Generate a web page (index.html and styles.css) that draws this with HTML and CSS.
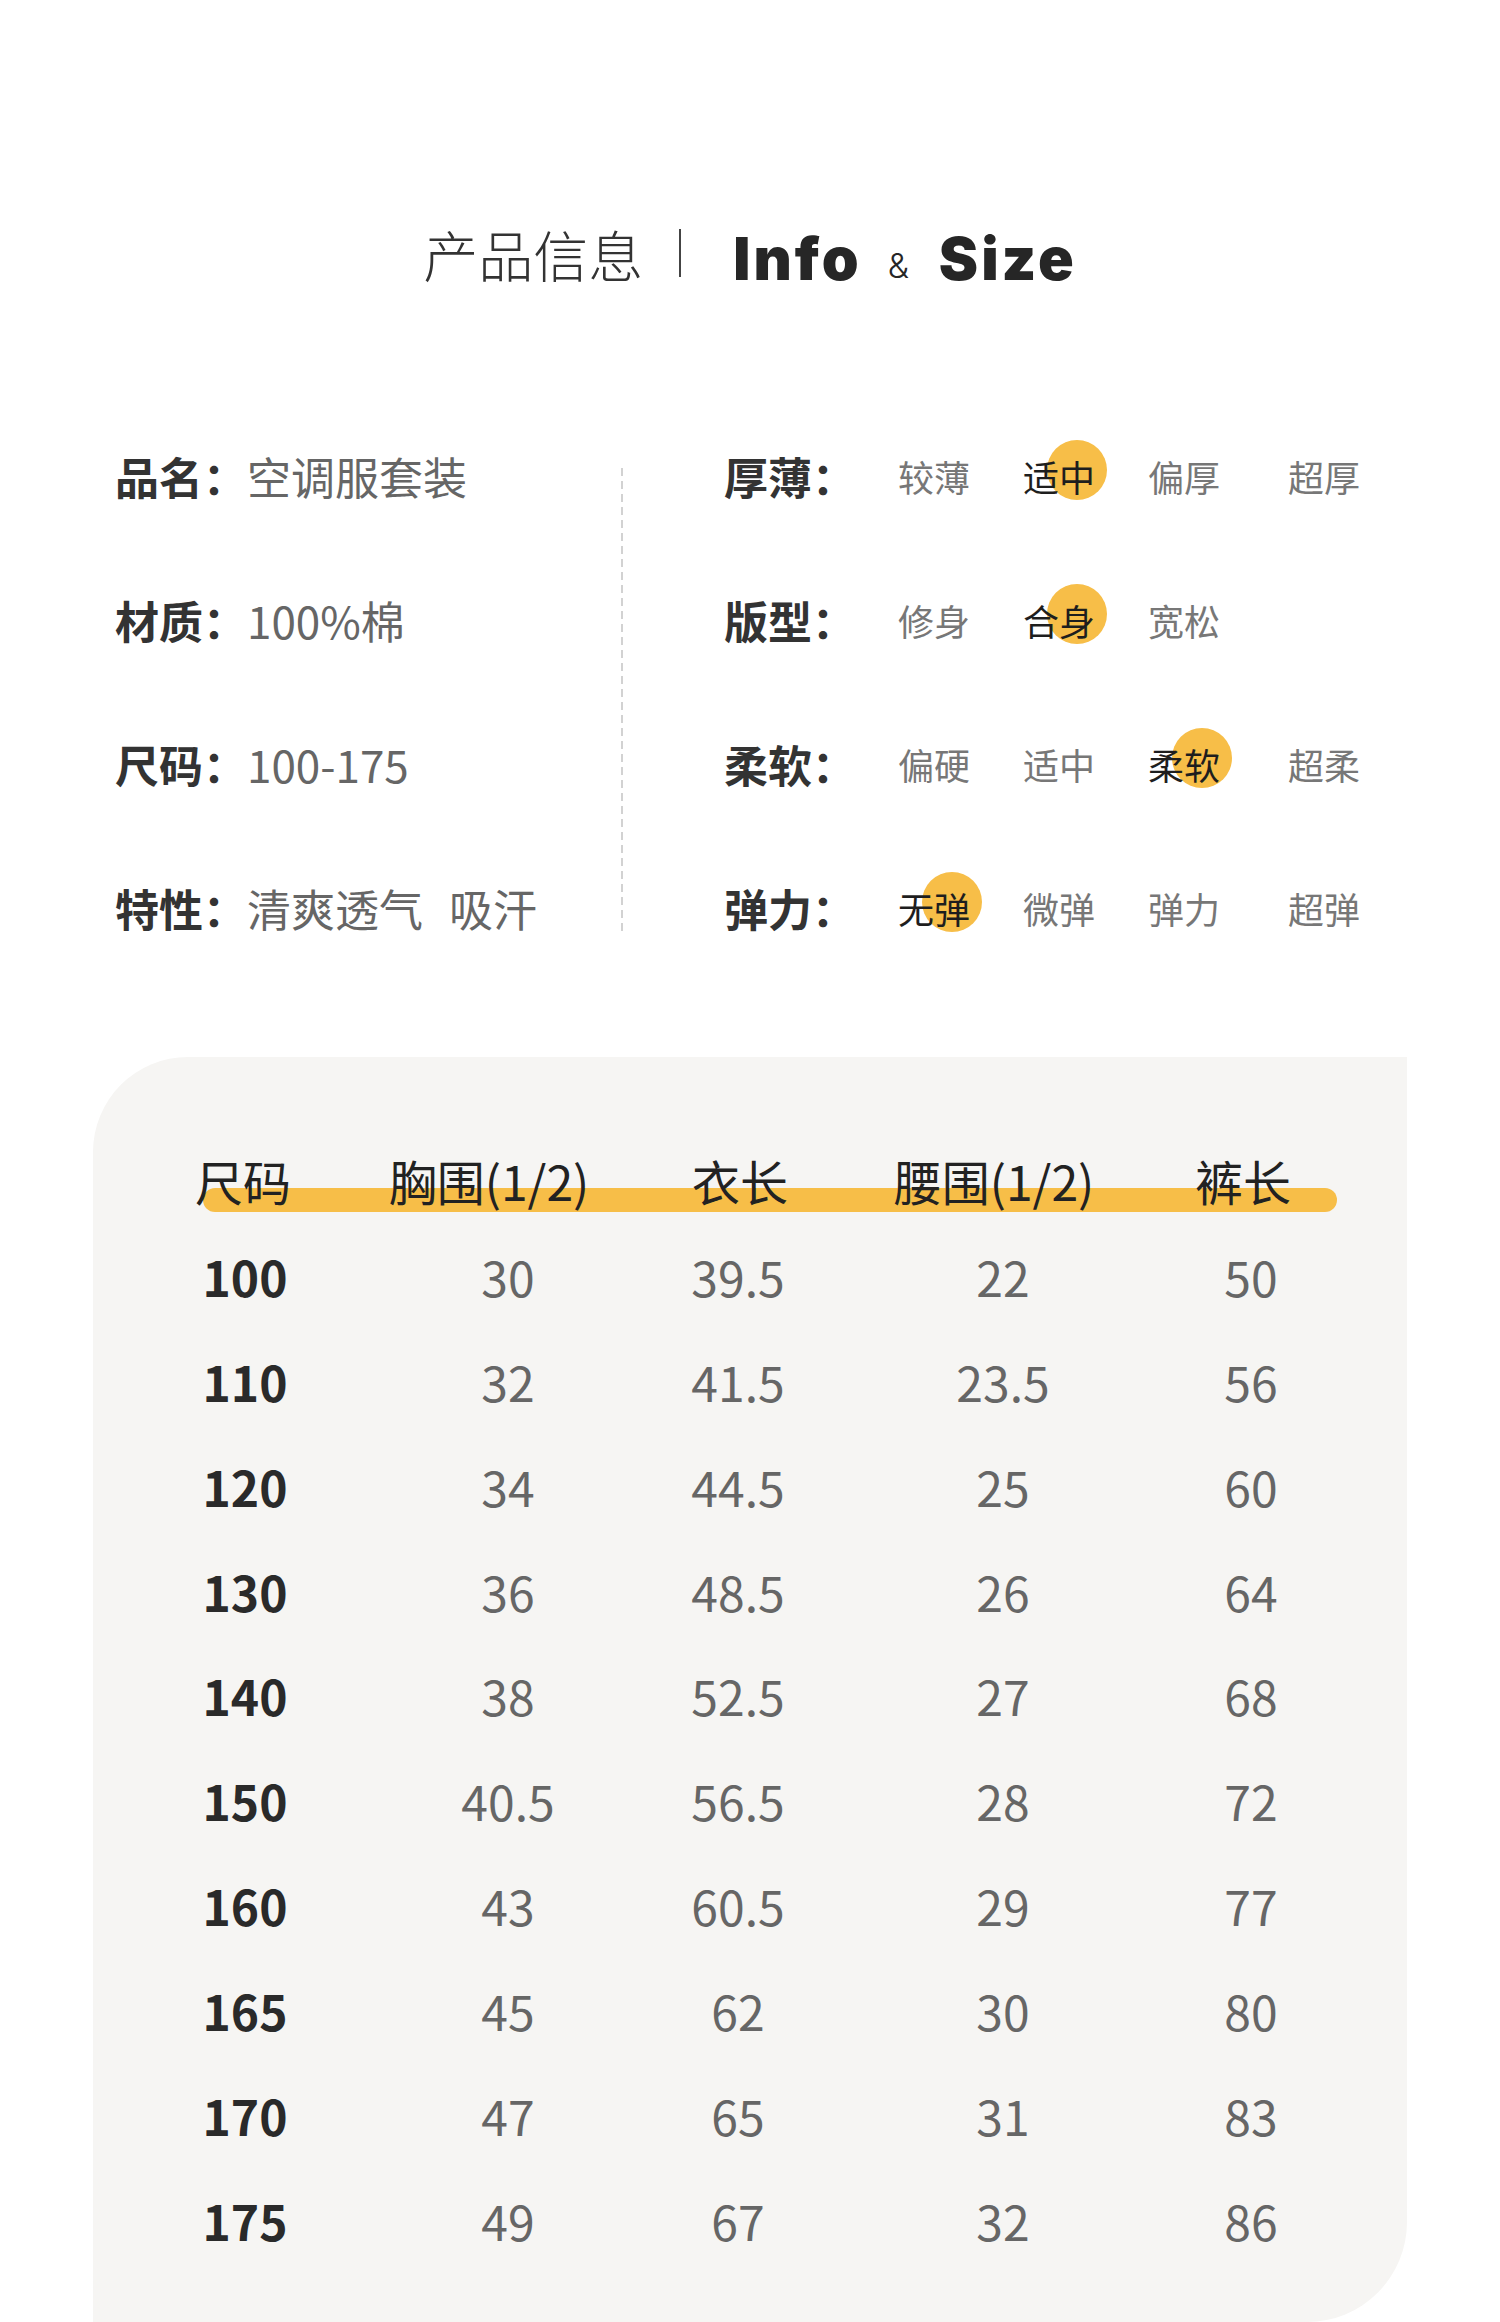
FILE: index.html
```html
<!DOCTYPE html>
<html lang="zh-CN">
<head>
<meta charset="utf-8">
<title>产品信息 Info &amp; Size</title>
<link rel="stylesheet" href="styles.css">
</head>
<body>
<div class="page">
  <header class="title">
    <span class="title-cn">产品信息</span>
    <span class="title-sep"></span>
    <span class="title-en">Info<span class="amp">&amp;</span>Size</span>
  </header>

  <section class="info">
    <div class="info-left">
      <div class="irow"><span class="lbl">品名：</span><span class="val">空调服套装</span></div>
      <div class="irow"><span class="lbl">材质：</span><span class="val">100%棉</span></div>
      <div class="irow"><span class="lbl">尺码：</span><span class="val">100-175</span></div>
      <div class="irow"><span class="lbl">特性：</span><span class="val">清爽透气<span class="gap">吸汗</span></span></div>
    </div>
    <div class="info-divider"></div>
    <div class="info-right">
      <div class="rrow">
        <span class="lbl">厚薄：</span>
        <div class="opts">
          <span class="opt">较薄</span>
          <span class="opt on">适<span class="hl">中</span></span>
          <span class="opt">偏厚</span>
          <span class="opt">超厚</span>
        </div>
      </div>
      <div class="rrow">
        <span class="lbl">版型：</span>
        <div class="opts">
          <span class="opt">修身</span>
          <span class="opt on">合<span class="hl">身</span></span>
          <span class="opt">宽松</span>
        </div>
      </div>
      <div class="rrow">
        <span class="lbl">柔软：</span>
        <div class="opts">
          <span class="opt">偏硬</span>
          <span class="opt">适中</span>
          <span class="opt on">柔<span class="hl">软</span></span>
          <span class="opt">超柔</span>
        </div>
      </div>
      <div class="rrow">
        <span class="lbl">弹力：</span>
        <div class="opts">
          <span class="opt on">无<span class="hl">弹</span></span>
          <span class="opt">微弹</span>
          <span class="opt">弹力</span>
          <span class="opt">超弹</span>
        </div>
      </div>
    </div>
  </section>

  <section class="panel">
    <div class="thead">
      <span>尺码</span><span>胸围(1/2)</span><span>衣长</span><span>腰围(1/2)</span><span>裤长</span>
    </div>
    <div class="tbody">
      <div class="trow"><span class="sz">100</span><span>30</span><span>39.5</span><span>22</span><span>50</span></div>
      <div class="trow"><span class="sz">110</span><span>32</span><span>41.5</span><span>23.5</span><span>56</span></div>
      <div class="trow"><span class="sz">120</span><span>34</span><span>44.5</span><span>25</span><span>60</span></div>
      <div class="trow"><span class="sz">130</span><span>36</span><span>48.5</span><span>26</span><span>64</span></div>
      <div class="trow"><span class="sz">140</span><span>38</span><span>52.5</span><span>27</span><span>68</span></div>
      <div class="trow"><span class="sz">150</span><span>40.5</span><span>56.5</span><span>28</span><span>72</span></div>
      <div class="trow"><span class="sz">160</span><span>43</span><span>60.5</span><span>29</span><span>77</span></div>
      <div class="trow"><span class="sz">165</span><span>45</span><span>62</span><span>30</span><span>80</span></div>
      <div class="trow"><span class="sz">170</span><span>47</span><span>65</span><span>31</span><span>83</span></div>
      <div class="trow"><span class="sz">175</span><span>49</span><span>67</span><span>32</span><span>86</span></div>
    </div>
  </section>
</div>
</body>
</html>
```

FILE: styles.css
```css
html, body {
  margin: 0;
  padding: 0;
  background: #ffffff;
}

body {
  font-family: "Noto Sans CJK SC", "Noto Sans", sans-serif;
  color: #333;
}

.page {
  width: 1500px;
  height: 2322px;
  overflow: hidden;
}

/* ---------- title ---------- */
.title {
  display: flex;
  justify-content: center;
  align-items: center;
  padding-top: 223px;
  height: 60px;
}

.title-cn {
  font-size: 55px;
  font-weight: 300;
  line-height: 60px;
  color: #333;
}

.title-sep {
  width: 2px;
  height: 48px;
  background: #444;
  margin: 0 52px 0 36px;
}

.title-en {
  font-family: "Inter", "Liberation Sans", sans-serif;
  font-weight: 900;
  font-size: 59px;
  line-height: 60px;
  letter-spacing: 3px;
  color: #262626;
  padding-top: 18px;
}

.amp {
  display: inline-block;
  font-weight: 300;
  font-size: 34px;
  letter-spacing: 0;
  margin: 0 30px 0 26px;
  vertical-align: 2px;
}

/* ---------- info ---------- */
.info {
  display: flex;
  align-items: flex-start;
  margin-top: 121px;
  padding-left: 115px;
  height: 576px;
}

.info-left {
  width: 506px;
}

.irow {
  height: 144px;
  line-height: 144px;
  font-size: 44px;
  white-space: nowrap;
}

.lbl {
  font-weight: 700;
  color: #333;
}

.val {
  color: #666;
}

.gap {
  margin-left: 26px;
}

.info-divider {
  width: 2px;
  height: 465px;
  margin-top: 64px;
  background: repeating-linear-gradient(to bottom, #d2d2d2 0 8px, transparent 8px 13px);
}

.info-right {
  margin-left: 101px;
}

.rrow {
  display: flex;
  align-items: center;
  height: 144px;
}

.rrow .lbl {
  font-size: 44px;
  line-height: 144px;
  width: 132px;
  white-space: nowrap;
}

.opts {
  display: grid;
  grid-template-columns: 125px 125px 140px auto;
  margin-left: 42px;
  font-size: 36px;
  color: #777;
  white-space: nowrap;
}

.opt {
  position: relative;
  z-index: 0;
}

.opt.on {
  color: #1e1e1e;
}

.hl {
  position: relative;
}

.hl::before {
  content: "";
  position: absolute;
  z-index: -1;
  left: -12px;
  top: -10px;
  width: 60px;
  height: 60px;
  border-radius: 50%;
  background: #f7be48;
}

/* ---------- size table ---------- */
.panel {
  box-sizing: border-box;
  margin: 77px 0 0 93px;
  width: 1314px;
  height: 1265px;
  padding-top: 93px;
  background: #f6f5f3;
  border-radius: 95px 0 100px 0;
}

.thead {
  position: relative;
  z-index: 0;
  display: grid;
  grid-template-columns: 200px 292px 210px 298px 200px;
  margin-left: 50px;
  font-size: 48px;
  line-height: 60px;
  color: #222;
  text-align: center;
  white-space: nowrap;
}

.thead::before {
  content: "";
  position: absolute;
  z-index: -1;
  left: 60px;
  top: 38px;
  width: 1134px;
  height: 24px;
  border-radius: 12px;
  background: #f7be48;
}

.tbody {
  margin-top: 14px;
}

.trow {
  display: grid;
  grid-template-columns: 200px 326px 134px 396px 100px;
  margin-left: 52px;
  height: 104.85px;
  line-height: 104.85px;
  font-size: 48px;
  color: #666;
  text-align: center;
  white-space: nowrap;
}

.trow .sz {
  font-weight: 700;
  color: #2a2a2a;
}
```
